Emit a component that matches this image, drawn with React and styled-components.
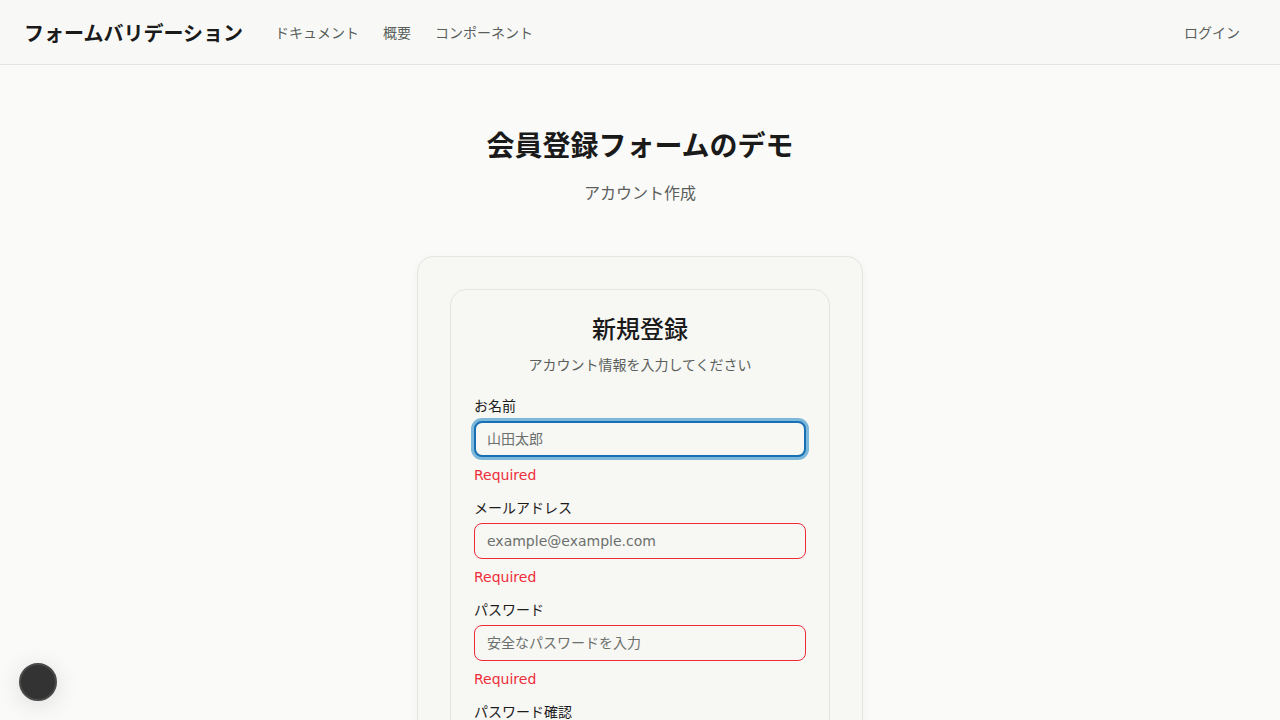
import React from "react";
import styled, { createGlobalStyle, css } from "styled-components";

const GlobalStyle = createGlobalStyle`
  * { box-sizing: border-box; }
  html, body { margin: 0; padding: 0; }
  body {
    background: #fafaf8;
    color: #1c1c1c;
    font-family: "DejaVu Sans", "Noto Sans CJK JP", sans-serif;
  }
`;

const Page = styled.div`
  min-height: 100vh;
  display: flex;
  flex-direction: column;
`;

const Header = styled.header`
  height: 65px;
  display: flex;
  align-items: center;
  padding: 0 24px;
  background: #f8f9f7;
  border-bottom: 1px solid #e4e6e3;
`;

const Brand = styled.div`
  font-size: 20px;
  font-weight: 600;
  color: #1a1a1a;
  margin-right: 32px;
`;

const Nav = styled.nav`
  display: flex;
  gap: 24px;
  flex: 1;
`;

const NavLink = styled.a`
  font-size: 14px;
  color: #5a5f5c;
  text-decoration: none;
`;

const HeaderButton = styled.button`
  font: inherit;
  font-size: 14px;
  color: #5a5f5c;
  background: none;
  border: none;
  padding: 8px 16px;
`;

const Main = styled.main`
  display: flex;
  flex-direction: column;
  align-items: center;
  padding-top: 64px;
`;

const Title = styled.h1`
  margin: 0;
  font-size: 28px;
  line-height: 36px;
  font-weight: 600;
  color: #1a1a1a;
`;

const Subtitle = styled.p`
  margin: 17px 0 0;
  font-size: 16px;
  line-height: 24px;
  color: #5a5f5c;
`;

const OuterCard = styled.section`
  margin-top: 50px;
  width: 446px;
  padding: 32px;
  background: #f7f7f4;
  border: 1px solid #e4e4e0;
  border-radius: 16px;
  box-shadow: 0 2px 8px rgba(0, 0, 0, 0.04);
`;

const InnerCard = styled.div`
  padding: 24px 23px;
  background: #f7f7f4;
  border: 1px solid #e4e4e0;
  border-radius: 16px;
`;

const CardTitle = styled.h2`
  margin: 0;
  text-align: center;
  font-size: 24px;
  line-height: 32px;
  font-weight: 500;
  color: #1a1a1a;
`;

const CardSubtitle = styled.p`
  margin: 9px 0 0;
  text-align: center;
  font-size: 14px;
  line-height: 20px;
  color: #5a5f5c;
`;

const Form = styled.form`
  margin-top: 21px;
  display: flex;
  flex-direction: column;
  gap: 13px;
`;

const Field = styled.div`
  display: flex;
  flex-direction: column;
`;

const Label = styled.label`
  font-size: 14px;
  line-height: 20px;
  color: #1c1c1c;
  margin-bottom: 5px;
`;

const Input = styled.input`
  height: 36px;
  width: 100%;
  padding: 0 12px;
  font-family: inherit;
  font-size: 14px;
  color: #1c1c1c;
  background: #f7f7f4;
  border-radius: 8px;
  outline: none;
  border: 1px solid ${(p) => (p.$error ? "#ef2b37" : "#d9d9d5")};
  &::placeholder { color: #6c706d; }
  ${(p) =>
    p.$focused &&
    css`
      border: 2px solid #1670b3;
      padding: 0 11px;
      box-shadow: 0 0 0 3px #7db7da;
    `}
`;

const ErrorText = styled.div`
  margin-top: 8px;
  font-size: 14px;
  line-height: 20px;
  color: #ee2d3a;
`;

const FloatingButton = styled.button`
  position: fixed;
  left: 19px;
  bottom: 19px;
  width: 38px;
  height: 38px;
  border-radius: 50%;
  background: #333333;
  border: 2px solid #4a4a4a;
  box-shadow: 0 4px 24px rgba(0, 0, 0, 0.12);
  padding: 0;
`;

const fields = [
  { label: "お名前", placeholder: "山田太郎", type: "text", focused: true },
  { label: "メールアドレス", placeholder: "example@example.com", type: "email" },
  { label: "パスワード", placeholder: "安全なパスワードを入力", type: "password" },
  { label: "パスワード確認", placeholder: "もう一度入力してください", type: "password" },
];

export default function App() {
  return (
    <>
      <GlobalStyle />
      <Page>
        <Header>
          <Brand>フォームバリデーション</Brand>
          <Nav>
            <NavLink href="#">ドキュメント</NavLink>
            <NavLink href="#">概要</NavLink>
            <NavLink href="#">コンポーネント</NavLink>
          </Nav>
          <HeaderButton>ログイン</HeaderButton>
        </Header>
        <Main>
          <Title>会員登録フォームのデモ</Title>
          <Subtitle>アカウント作成</Subtitle>
          <OuterCard>
            <InnerCard>
              <CardTitle>新規登録</CardTitle>
              <CardSubtitle>アカウント情報を入力してください</CardSubtitle>
              <Form onSubmit={(e) => e.preventDefault()}>
                {fields.map((f, i) => (
                  <Field key={i}>
                    <Label>{f.label}</Label>
                    <Input
                      type={f.type}
                      placeholder={f.placeholder}
                      $focused={f.focused}
                      $error={!f.focused}
                      autoFocus={f.focused}
                    />
                    <ErrorText>Required</ErrorText>
                  </Field>
                ))}
              </Form>
            </InnerCard>
          </OuterCard>
        </Main>
        <FloatingButton aria-label="menu" />
      </Page>
    </>
  );
}
